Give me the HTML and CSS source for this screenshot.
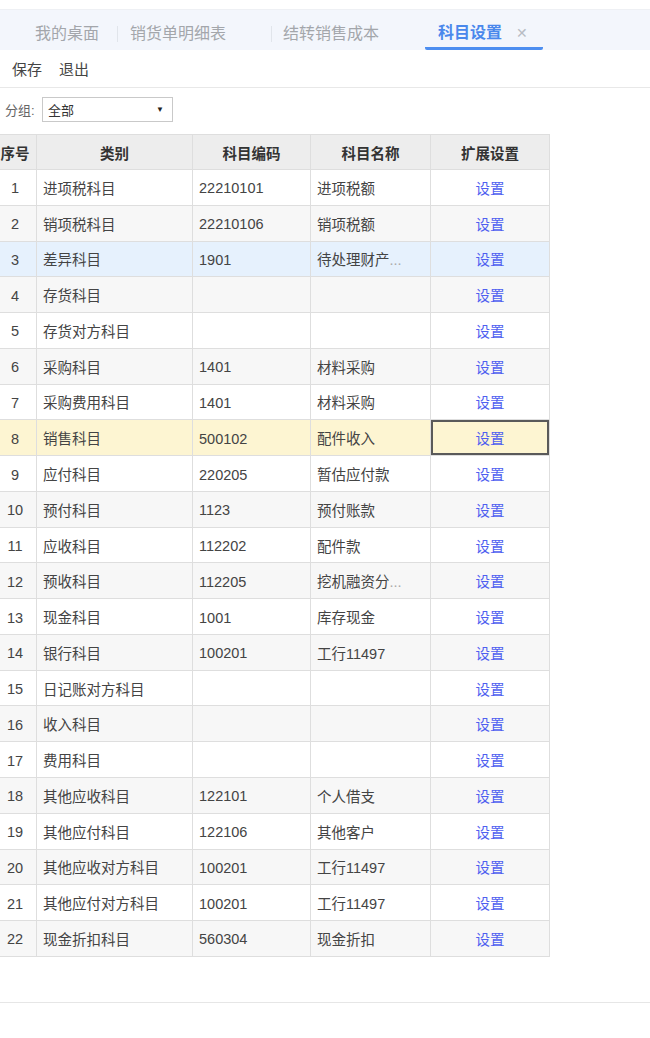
FILE: index.html
```html
<!DOCTYPE html>
<html lang="zh">
<head>
<meta charset="utf-8">
<title>科目设置</title>
<link rel="stylesheet" href="styles.css">
</head>
<body>
<div class="topgap"></div>
<div class="tabs">
  <div class="tab t1">我的桌面</div>
  <span class="sep"></span>
  <div class="tab t2">销货单明细表</div>
  <span class="sep"></span>
  <div class="tab t3">结转销售成本</div>
  <div class="tab active">科目设置<span class="close">✕</span></div>
</div>
<div class="toolbar">
  <span class="btn">保存</span>
  <span class="btn">退出</span>
</div>
<div class="filter">
  <span class="flabel">分组:</span>
  <div class="select"><span>全部</span><span class="arrow">▼</span></div>
</div>
<table class="grid">
  <colgroup>
    <col class="c1"><col class="c2"><col class="c3"><col class="c4"><col class="c5">
  </colgroup>
  <thead>
    <tr><th>序号</th><th>类别</th><th>科目编码</th><th>科目名称</th><th>扩展设置</th></tr>
  </thead>
  <tbody>
    <tr><td class="n">1</td><td>进项税科目</td><td class="d">22210101</td><td>进项税额</td><td class="l"><a>设置</a></td></tr>
    <tr class="alt"><td class="n">2</td><td>销项税科目</td><td class="d">22210106</td><td>销项税额</td><td class="l"><a>设置</a></td></tr>
    <tr class="sel"><td class="n">3</td><td>差异科目</td><td class="d">1901</td><td>待处理财产<span class="dots">...</span></td><td class="l"><a>设置</a></td></tr>
    <tr class="alt"><td class="n">4</td><td>存货科目</td><td></td><td></td><td class="l"><a>设置</a></td></tr>
    <tr><td class="n">5</td><td>存货对方科目</td><td></td><td></td><td class="l"><a>设置</a></td></tr>
    <tr class="alt"><td class="n">6</td><td>采购科目</td><td class="d">1401</td><td>材料采购</td><td class="l"><a>设置</a></td></tr>
    <tr><td class="n">7</td><td>采购费用科目</td><td class="d">1401</td><td>材料采购</td><td class="l"><a>设置</a></td></tr>
    <tr class="hot"><td class="n">8</td><td>销售科目</td><td class="d">500102</td><td>配件收入</td><td class="l focus"><a>设置</a></td></tr>
    <tr><td class="n">9</td><td>应付科目</td><td class="d">220205</td><td>暂估应付款</td><td class="l"><a>设置</a></td></tr>
    <tr class="alt"><td class="n">10</td><td>预付科目</td><td class="d">1123</td><td>预付账款</td><td class="l"><a>设置</a></td></tr>
    <tr><td class="n">11</td><td>应收科目</td><td class="d">112202</td><td>配件款</td><td class="l"><a>设置</a></td></tr>
    <tr class="alt"><td class="n">12</td><td>预收科目</td><td class="d">112205</td><td>挖机融资分<span class="dots">...</span></td><td class="l"><a>设置</a></td></tr>
    <tr><td class="n">13</td><td>现金科目</td><td class="d">1001</td><td>库存现金</td><td class="l"><a>设置</a></td></tr>
    <tr class="alt"><td class="n">14</td><td>银行科目</td><td class="d">100201</td><td>工行11497</td><td class="l"><a>设置</a></td></tr>
    <tr><td class="n">15</td><td>日记账对方科目</td><td></td><td></td><td class="l"><a>设置</a></td></tr>
    <tr class="alt"><td class="n">16</td><td>收入科目</td><td></td><td></td><td class="l"><a>设置</a></td></tr>
    <tr><td class="n">17</td><td>费用科目</td><td></td><td></td><td class="l"><a>设置</a></td></tr>
    <tr class="alt"><td class="n">18</td><td>其他应收科目</td><td class="d">122101</td><td>个人借支</td><td class="l"><a>设置</a></td></tr>
    <tr><td class="n">19</td><td>其他应付科目</td><td class="d">122106</td><td>其他客户</td><td class="l"><a>设置</a></td></tr>
    <tr class="alt"><td class="n">20</td><td>其他应收对方科目</td><td class="d">100201</td><td>工行11497</td><td class="l"><a>设置</a></td></tr>
    <tr><td class="n">21</td><td>其他应付对方科目</td><td class="d">100201</td><td>工行11497</td><td class="l"><a>设置</a></td></tr>
    <tr class="alt"><td class="n">22</td><td>现金折扣科目</td><td class="d">560304</td><td>现金折扣</td><td class="l"><a>设置</a></td></tr>
  </tbody>
</table>
<div class="footer"></div>
</body>
</html>
```

FILE: styles.css
```css
* { box-sizing: border-box; }
html, body { margin: 0; padding: 0; background: #fff; }
body {
  font-family: "Liberation Sans", "Noto Sans CJK SC", sans-serif;
  color: #444;
  width: 650px;
  overflow: hidden;
}
.topgap { height: 10px; background: #fff; border-bottom: 1px solid #eef0f4; }
.tabs {
  height: 40px;
  background: #f3f6fc;
  display: flex;
  align-items: center;
  padding-top: 7px;
  font-size: 16px;
  color: #a3a6ab;
}
.tab { white-space: nowrap; line-height: 20px; }
.t1 { padding: 0 18px 0 35px; }
.t2 { padding: 0 45px 0 12px; }
.t3 { padding: 0 46px 0 11px; }
.sep { width: 1px; height: 16px; background: #e1e5eb; }
.tab.active {
  align-self: stretch;
  display: flex;
  align-items: center;
  padding: 1px 15px 0 13px;
  color: #4a88ec;
  font-weight: bold;
  border-bottom: 3px solid #4d8ef0;
  border-radius: 0 0 2px 2px;
}
.close { margin-left: 14px; font-weight: normal; color: #b8bcc4; font-size: 14px; }
.toolbar {
  height: 38px;
  display: flex;
  align-items: center;
  gap: 17px;
  padding-left: 12px;
  font-size: 15px;
  color: #444;
  border-bottom: 1px solid #e8e8e8;
}
.filter {
  display: flex;
  align-items: center;
  padding: 9px 0 12px 5px;
  font-size: 13px;
  color: #666;
}
.flabel { width: 37px; }
.select {
  width: 131px;
  height: 25px;
  border: 1px solid #c9c9c9;
  display: flex;
  align-items: center;
  justify-content: space-between;
  padding: 0 8px 0 5px;
  color: #333;
  font-size: 13px;
}
.arrow { font-size: 8px; color: #222; }
.grid {
  border-collapse: collapse;
  table-layout: fixed;
  width: 556px;
  margin-left: -7px;
  font-size: 14.5px;
}
.c1 { width: 43px; }
.c2 { width: 156px; }
.c3 { width: 118px; }
.c4 { width: 120px; }
.c5 { width: 119px; }
.grid th, .grid td {
  border: 1px solid #dedede;
  padding: 0 6px;
  white-space: nowrap;
  overflow: hidden;
  text-align: left;
}
.grid th {
  height: 35px;
  background: #ededed;
  font-weight: bold;
  color: #333;
  text-align: center;
}
.grid td { height: 35.77px; color: #444; }
.grid td.d { padding-top: 2px; }
.grid td.n { text-align: center; padding: 2px 2px 0; }
.grid td.l { text-align: center; }
.grid a { color: #4f5ff0; }
.grid tr.alt td { background: #f7f7f7; }
.grid tr.sel td { background: #e6f1fd; }
.grid tr.hot td { background: #fdf5d2; }
.grid td.focus { box-shadow: inset 0 0 0 2px #5a5a5a; }
.dots { color: #aaa; }
.footer { margin-top: 45px; border-top: 1px solid #e6e6e6; height: 35px; }
```
